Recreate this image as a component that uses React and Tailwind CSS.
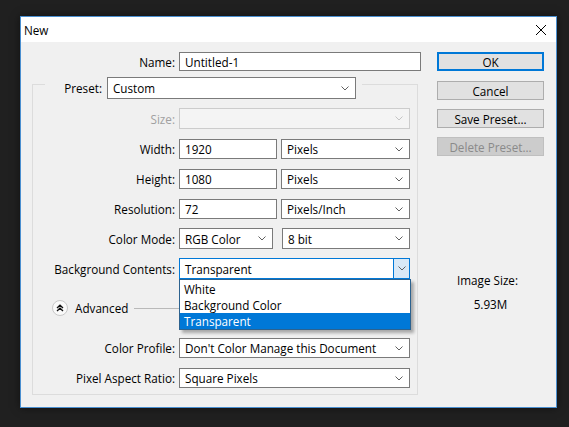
import React from "react";

const Chevron = ({ color = "#606060" }) => (
  <svg width="8" height="5" viewBox="0 0 8 5" className="shrink-0">
    <path d="M0.5 0.5 L4 4 L7.5 0.5" fill="none" stroke={color} strokeWidth="1" />
  </svg>
);

const Select = ({ value, w, disabled = false }) => (
  <div
    className={`flex items-center justify-between h-full pl-[5px] pr-[6px] border ${
      disabled ? "border-[#cccccc] bg-[#f4f4f4]" : "border-[#7a7a7a] bg-white"
    } ${w}`}
  >
    <span>{value}</span>
    <Chevron color={disabled ? "#c4c4c4" : "#606060"} />
  </div>
);

const Input = ({ value, w }) => (
  <div className={`flex items-center h-full pl-[5px] border border-[#7a7a7a] bg-white ${w}`}>
    {value}
  </div>
);

const Row = ({ label, mt, h = "h-[20px]", disabled = false, children }) => (
  <div className={`flex items-center ${mt} ${h}`}>
    <div className={`w-[146px] pr-[4px] text-right ${disabled ? "text-[#a0a0a0]" : ""}`}>{label}</div>
    {children}
  </div>
);

const Button = ({ label, primary = false, disabled = false, mt }) => (
  <div
    className={`flex items-center justify-center h-[19px] ${mt} ${
      primary
        ? "border-2 border-[#0078d7] bg-[#e1e1e1]"
        : disabled
        ? "border border-[#bfbfbf] bg-[#cccccc] text-[#8a8a8a]"
        : "border border-[#adadad] bg-[#e1e1e1]"
    }`}
  >
    {label}
  </div>
);

export default function App() {
  return (
    <div
      className="w-[569px] h-[427px] bg-[#202020] pt-[16px] pl-[20px] text-[11.7px] leading-[16px] text-black"
      style={{ fontFamily: '"Open Sans", "Noto Sans", sans-serif' }}
    >
      <div className="w-[537px] h-[392px] border border-[#4a8fd0] flex flex-col bg-[#f0f0f0] shadow-[0_0_8px_rgba(0,0,0,0.5)]">
        {/* title bar */}
        <div className="h-[25px] bg-white flex items-center justify-between pl-[3px] pr-[10px]">
          <span>New</span>
          <svg width="10" height="10" viewBox="0 0 10 10">
            <path d="M0 0 L10 10 M10 0 L0 10" stroke="#000" strokeWidth="1" />
          </svg>
        </div>

        <div className="flex flex-1">
          {/* left side */}
          <div className="w-[400px] flex flex-col">
            <div className="flex items-center h-[19px] mt-[10px]">
              <div className="w-[158px] pr-[4px] text-right">Name:</div>
              <Input value="Untitled-1" w="w-[242px]" />
            </div>

            <div className="relative ml-[11px] mt-[13px] w-[386px] h-[311px] border border-[#dcdcdc] flex flex-col">
              {/* preset as group legend */}
              <div className="flex items-center -mt-[8px] ml-[12px] w-fit h-[22px] bg-[#f0f0f0] pr-[6px]">
                <div className="w-[62px] pr-[5px] text-right">Preset:</div>
                <Select value="Custom" w="w-[249px]" />
              </div>

              <Row label="Size:" mt="mt-[9px]" h="h-[21px]" disabled>
                <Select value="" w="w-[231px]" disabled />
              </Row>
              <Row label="Width:" mt="mt-[10px]">
                <Input value="1920" w="w-[98px]" />
                <div className="ml-[4px] h-full">
                  <Select value="Pixels" w="w-[129px]" />
                </div>
              </Row>
              <Row label="Height:" mt="mt-[10px]">
                <Input value="1080" w="w-[98px]" />
                <div className="ml-[4px] h-full">
                  <Select value="Pixels" w="w-[129px]" />
                </div>
              </Row>
              <Row label="Resolution:" mt="mt-[10px]">
                <Input value="72" w="w-[98px]" />
                <div className="ml-[4px] h-full">
                  <Select value="Pixels/Inch" w="w-[129px]" />
                </div>
              </Row>
              <Row label="Color Mode:" mt="mt-[9px]" h="h-[21px]">
                <Select value="RGB Color" w="w-[94px]" />
                <div className="ml-[9px] h-full">
                  <Select value="8 bit" w="w-[128px]" />
                </div>
              </Row>
              <Row label="Background Contents:" mt="mt-[9px]" h="h-[21px]">
                <div className="relative h-full z-10">
                  <div className="flex items-center h-full w-[231px] border border-[#0078d7] bg-white">
                    <span className="flex-1 pl-[5px]">Transparent</span>
                    <div className="flex items-center justify-center w-[16px] h-full bg-[#d9e9f7] border-l border-[#0078d7]">
                      <Chevron />
                    </div>
                  </div>
                  {/* open dropdown list */}
                  <div className="absolute left-0 top-full w-[232px] h-[51px] border border-[#2c628f] bg-white shadow-[3px_3px_3px_rgba(0,0,0,0.3)] pt-[1px] flex flex-col">
                    <div className="h-[16px] pl-[4px]">White</div>
                    <div className="h-[16px] pl-[4px]">Background Color</div>
                    <div className="h-[16px] pl-[4px] bg-[#0078d7] text-white">Transparent</div>
                  </div>
                </div>
              </Row>

              {/* advanced */}
              <div className="flex items-center h-[20px] mt-[19px]">
                <div className="ml-[19px] w-[16px] h-[16px] rounded-full border border-[#c8c8c8] bg-[#fafafa] flex items-center justify-center">
                  <svg width="8" height="8" viewBox="0 0 8 8">
                    <path d="M1 4 L4 1.3 L7 4 M1 7 L4 4.3 L7 7" fill="none" stroke="#111" strokeWidth="1.4" />
                  </svg>
                </div>
                <span className="ml-[7px]">Advanced</span>
                <div className="ml-[6px] mr-[7px] flex-1 h-px bg-[#b9b9b9]" />
              </div>

              <Row label="Color Profile:" mt="mt-[20px]">
                <Select value="Don't Color Manage this Document" w="w-[231px]" />
              </Row>
              <Row label="Pixel Aspect Ratio:" mt="mt-[10px]">
                <Select value="Square Pixels" w="w-[231px]" />
              </Row>
            </div>
          </div>

          {/* right side */}
          <div className="ml-[16px] w-[107px] flex flex-col">
            <Button label="OK" primary mt="mt-[10px]" />
            <Button label="Cancel" mt="mt-[10px]" />
            <Button label="Save Preset..." mt="mt-[9px]" />
            <Button label="Delete Preset..." disabled mt="mt-[9px]" />
            <div className="mt-[116px] pr-[6px] text-center">Image Size:</div>
            <div className="mt-[8px] text-center">5.93M</div>
          </div>
        </div>
      </div>
    </div>
  );
}
